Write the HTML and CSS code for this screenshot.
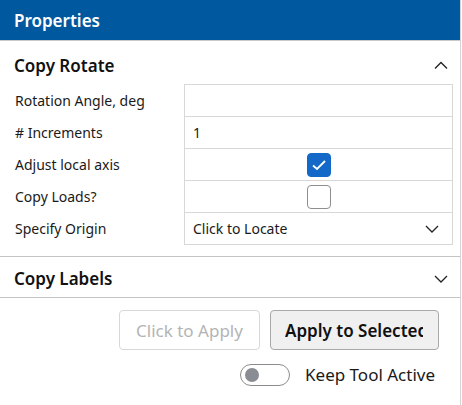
FILE: index.html
```html
<!DOCTYPE html>
<html>
<head>
<meta charset="utf-8">
<link rel="stylesheet" href="styles.css">
</head>
<body>
<div class="panel">
  <div class="header">Properties</div>
  <div class="section">
    <div class="section-head">
      <span class="section-title">Copy Rotate</span>
      <svg class="chev" width="14" height="8" viewBox="0 0 14 8"><path d="M1 7.5 L7 1.5 L13 7.5" fill="none" stroke="#222" stroke-width="1.3"/></svg>
    </div>
    <div class="grid">
      <div class="lab">Rotation Angle, deg</div><div class="val"></div>
      <div class="lab">#&nbsp;Increments</div><div class="val">1</div>
      <div class="lab">Adjust local axis</div><div class="val center"><span class="cb on"><svg width="16" height="12" viewBox="0 0 16 12"><path d="M2 6.5 L6 10 L14 2" fill="none" stroke="#fff" stroke-width="1.8"/></svg></span></div>
      <div class="lab">Copy Loads?</div><div class="val center"><span class="cb"></span></div>
      <div class="lab">Specify Origin</div><div class="val select"><span>Click to Locate</span><svg width="14" height="8" viewBox="0 0 14 8"><path d="M1 1 L7 7 L13 1" fill="none" stroke="#222" stroke-width="1.3"/></svg></div>
    </div>
  </div>
  <div class="section-head collapsed">
    <span class="section-title">Copy Labels</span>
    <svg class="chev" width="14" height="8" viewBox="0 0 14 8"><path d="M1 1 L7 7 L13 1" fill="none" stroke="#222" stroke-width="1.3"/></svg>
  </div>
  <div class="actions">
    <button class="btn disabled">Click to Apply</button>
    <button class="btn primary"><span class="clip">Apply to Selected</span></button>
  </div>
  <div class="toggle-row">
    <span class="toggle"><span class="knob"></span></span>
    <span class="toggle-label">Keep Tool Active</span>
  </div>
</div>
</body>
</html>
```
FILE: styles.css
```css
html, body { margin: 0; padding: 0; background: #fff; }
body { font-family: "Noto Sans", "Open Sans", sans-serif; color: #1a1a1a; }
.panel { width: 461px; height: 405px; border-right: 1px solid #d4d4d4; box-sizing: border-box; }
.header { height: 41px; background: #00599f; color: #fff; font-size: 17px; font-weight: 600; display: flex; align-items: center; padding-left: 14px; border-bottom: 1px solid #c9c9c9; box-sizing: border-box; }
.section { border-bottom: 1px solid #c4c4c4; padding-bottom: 11px; }
.section-head { height: 43px; box-sizing: border-box; display: flex; align-items: center; justify-content: space-between; padding: 5px 12px 0 14px; }
.section-head.collapsed { height: 41px; padding-top: 3px; border-bottom: 1px solid #c4c4c4; }
.section-title { font-size: 17px; font-weight: 600; color: #111; }
.chev { display: block; }
.grid { display: grid; grid-template-columns: 176px 269px; margin-left: 8px; }
.lab { height: 32px; display: flex; align-items: center; padding-left: 7px; font-size: 14px; color: #1a1a1a; }
.val { height: 32px; box-sizing: border-box; border-left: 1px solid #d8d8d8; border-right: 1px solid #d8d8d8; border-top: 1px solid #d8d8d8; display: flex; align-items: center; padding-left: 8px; font-size: 14px; }
.val:last-child { border-bottom: 1px solid #d8d8d8; height: 33px; }
.val.center { justify-content: center; padding-left: 0; }
.val.select { justify-content: space-between; padding-right: 13px; }
.cb { width: 24px; height: 24px; box-sizing: border-box; border-radius: 4px; border: 1px solid #8e8e8e; display: flex; align-items: center; justify-content: center; background: #fff; }
.cb.on { background: #1468c8; border-color: #1468c8; }
.actions { display: flex; justify-content: flex-end; gap: 10px; padding: 12px 21px 0 0; }
.btn { height: 40px; font-family: inherit; font-size: 17px; border-radius: 4px; box-sizing: border-box; padding: 0; }
.btn.disabled { width: 141px; background: #fff; border: 1px solid #d8d8d8; color: #b4b4b4; text-align: center; white-space: nowrap; }
.btn.primary { width: 169px; background: #f0f0f0; border: 1px solid #a8a8a8; color: #111; font-weight: 600; white-space: nowrap; text-align: left; padding-left: 14px; }
.clip { display: block; width: 138px; overflow: hidden; }
.toggle-row { display: flex; justify-content: flex-end; align-items: center; gap: 15px; padding: 13px 25px 0 0; }
.toggle { width: 50px; height: 22px; box-sizing: border-box; border: 1px solid #8c8c8c; border-radius: 11px; display: flex; align-items: center; padding-left: 4px; }
.knob { width: 14px; height: 14px; border-radius: 50%; background: #8a8c94; }
.toggle-label { font-size: 17px; color: #1a1a1a; }
```
